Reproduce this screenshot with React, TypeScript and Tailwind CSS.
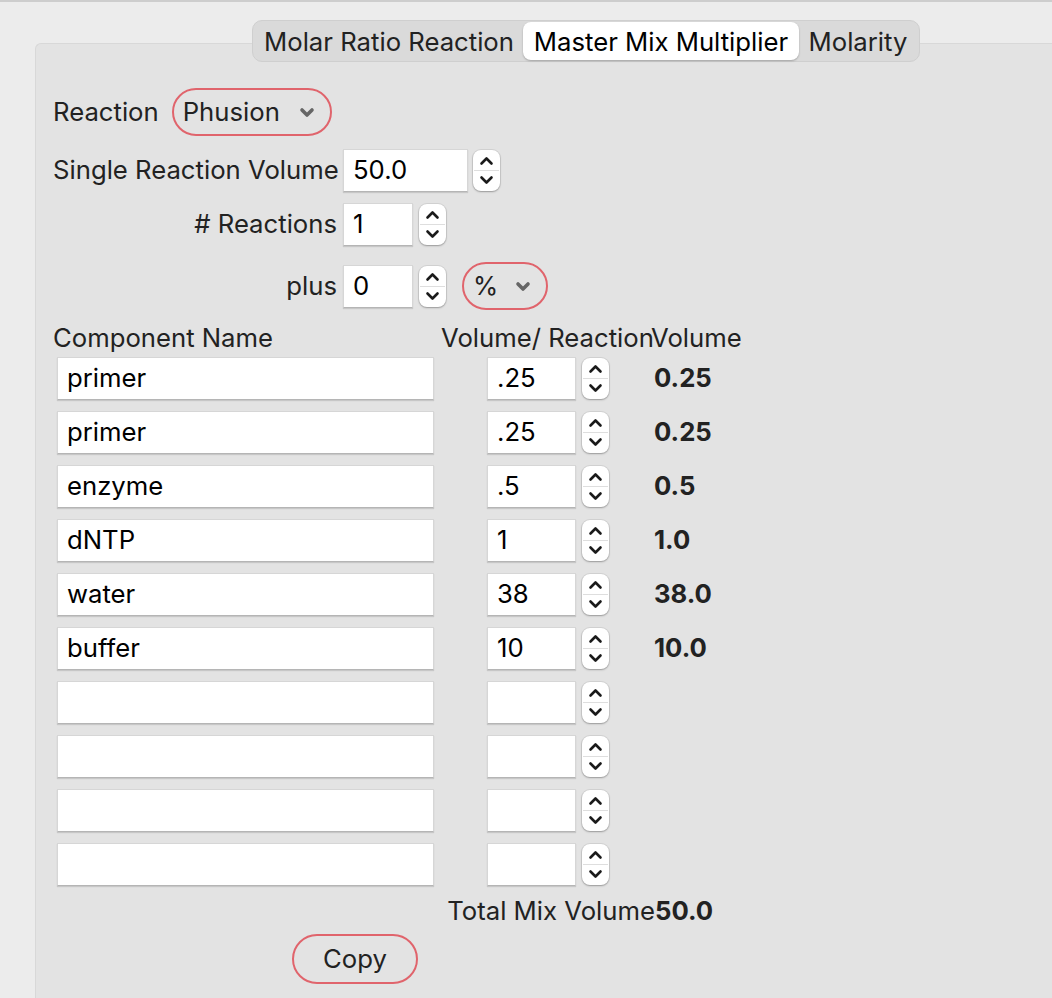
import React from 'react';

const FONT = { fontFamily: 'Inter, "Liberation Sans", Arial, sans-serif' };

interface MixRow {
  name: string;
  perReaction: string;
  volume: string;
}

const ROWS: MixRow[] = [
  { name: 'primer', perReaction: '.25', volume: '0.25' },
  { name: 'primer', perReaction: '.25', volume: '0.25' },
  { name: 'enzyme', perReaction: '.5', volume: '0.5' },
  { name: 'dNTP', perReaction: '1', volume: '1.0' },
  { name: 'water', perReaction: '38', volume: '38.0' },
  { name: 'buffer', perReaction: '10', volume: '10.0' },
  { name: '', perReaction: '', volume: '' },
  { name: '', perReaction: '', volume: '' },
  { name: '', perReaction: '', volume: '' },
  { name: '', perReaction: '', volume: '' },
];

const Chevron = ({ up }: { up?: boolean }) => (
  <svg width="15" height="10" viewBox="0 0 15 10" fill="none">
    <path
      d={up ? 'M2.5 7.5 L7.5 2.5 L12.5 7.5' : 'M2.5 2.5 L7.5 7.5 L12.5 2.5'}
      stroke="#1a1a1a"
      strokeWidth="2.6"
      strokeLinecap="round"
      strokeLinejoin="round"
    />
  </svg>
);

const Stepper = () => (
  <div className="w-[27px] h-[41px] rounded-[8px] bg-white shadow-[0_0_0_1px_rgba(0,0,0,0.07),0_1px_2px_rgba(0,0,0,0.28)] flex flex-col shrink-0">
    <div className="flex-1 flex items-center justify-center pt-[2px]">
      <Chevron up />
    </div>
    <div className="h-px bg-[#dedede] mx-[1px]" />
    <div className="flex-1 flex items-center justify-center pb-[2px]">
      <Chevron />
    </div>
  </div>
);

const TextField = ({ value, className }: { value: string; className: string }) => (
  <div
    className={`h-[43px] bg-white border border-[#d6d6d6] border-b-[#b5b5b5] shadow-[0_1px_1px_rgba(0,0,0,0.12)] flex items-center pl-[9px] text-[25.7px] text-black ${className}`}
  >
    {value}
  </div>
);

const PopupButton = ({ label, className }: { label: string; className: string }) => (
  <div
    className={`h-[48px] rounded-full border-2 border-[#e0646c] flex items-center justify-between pl-[9px] pr-[15px] text-[25.7px] text-[#222] ${className}`}
  >
    <span>{label}</span>
    <svg width="16" height="11" viewBox="0 0 16 11" fill="none">
      <path d="M3 3 L8 8 L13 3" stroke="#666" strokeWidth="3.6" strokeLinecap="round" strokeLinejoin="round" />
    </svg>
  </div>
);

export default function App() {
  return (
    <div
      className="h-[998px] overflow-hidden bg-[#ececec] border-t-2 border-[#cdcdcd] text-[#222]"
      style={FONT}
    >
      <div className="pt-[18px]">
        {/* Tabs */}
        <div className="relative z-10 ml-[252px] w-[668px] h-[42px] rounded-[10px] bg-[#dadada] border border-[#cfcfcf] flex items-center p-[2px] text-[25.7px]">
          <div className="w-[268px] h-full flex items-center justify-center pt-[3px]">Molar Ratio Reaction</div>
          <div className="w-[276px] h-[38px] flex items-center justify-center pt-[3px] bg-white rounded-[8px] shadow-[0_1px_2px_rgba(0,0,0,0.25)] text-black">
            Master Mix Multiplier
          </div>
          <div className="w-[118px] h-full flex items-center justify-center pt-[3px]">Molarity</div>
        </div>

        {/* Panel */}
        <div className="ml-[35px] -mt-[19px] h-[960px] bg-[#e3e3e3] border-l border-t border-[#d8d8d8] rounded-tl-[6px] pl-[17px] pt-[44px] text-[25.7px]">
          <div className="flex items-center h-[48px]">
            <span>Reaction</span>
            <PopupButton label="Phusion" className="ml-[13px] w-[160px]" />
          </div>

          <div className="flex items-center h-[43px] mt-[13px]">
            <span className="w-[284px] text-right whitespace-nowrap">Single Reaction Volume</span>
            <TextField value="50.0" className="ml-[6px] w-[125px]" />
            <div className="ml-[5px]">
              <Stepper />
            </div>
          </div>

          <div className="flex items-center h-[43px] mt-[11px]">
            <span className="w-[284px] text-right"># Reactions</span>
            <TextField value="1" className="ml-[6px] w-[70px]" />
            <div className="ml-[6px]">
              <Stepper />
            </div>
          </div>

          <div className="flex items-center h-[48px] mt-[16px]">
            <span className="w-[284px] text-right">plus</span>
            <TextField value="0" className="ml-[6px] w-[70px]" />
            <div className="ml-[6px]">
              <Stepper />
            </div>
            <PopupButton label="%" className="ml-[16px] w-[86px]" />
          </div>

          {/* Component table */}
          <div className="grid grid-cols-[388px_210px_1fr] items-center mt-[9px] h-[30px]">
            <span>Component Name</span>
            <span className="whitespace-nowrap">Volume/ Reaction</span>
            <span>Volume</span>
          </div>

          <div className="flex flex-col gap-[11px] mt-[8px]">
            {ROWS.map((row, i) => (
              <div key={i} className="grid grid-cols-[388px_210px_1fr] items-center h-[43px]">
                <TextField value={row.name} className="ml-[4px] w-[377px]" />
                <div className="flex items-center pl-[46px]">
                  <TextField value={row.perReaction} className="w-[89px]" />
                  <div className="ml-[6px]">
                    <Stepper />
                  </div>
                </div>
                <span className="pl-[3px] font-bold">{row.volume}</span>
              </div>
            ))}
          </div>

          <div className="grid grid-cols-[388px_210px_1fr] items-center h-[30px] mt-[6px]">
            <span />
            <span className="justify-self-end whitespace-nowrap -mr-[4px]">Total Mix Volume</span>
            <span className="pl-[4px] font-bold">50.0</span>
          </div>

          <button className="mt-[12px] ml-[239px] w-[126px] h-[50px] rounded-full border-2 border-[#e0646c] flex items-center justify-center text-[25.7px] text-[#222]">
            Copy
          </button>
        </div>
      </div>
    </div>
  );
}
